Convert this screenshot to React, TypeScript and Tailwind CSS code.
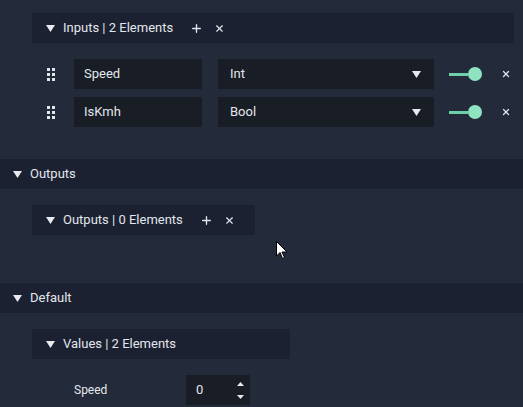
import { Plus, X } from 'lucide-react';

function Caret({ className = '' }: { className?: string }) {
    return (
        <svg width="9" height="7" viewBox="0 0 9 7" className={className}>
            <path d="M0 0 H9 L4.5 7 Z" fill="#e6e9ee" />
        </svg>
    );
}

function GroupHeader({ title, width, actions = true }: { title: string; width: string; actions?: boolean }) {
    return (
        <div className={`flex h-[30px] items-center bg-[#1b2130] pl-[14px] ${width}`}>
            <Caret />
            <span className="ml-[8px] text-[13px] text-[#e2e6ed]">{title}</span>
            {actions && (
                <>
                    <Plus className="ml-[17px] h-[13px] w-[13px] text-[#e2e6ed]" strokeWidth={2.5} />
                    <X className="ml-[11px] h-[11px] w-[11px] text-[#e2e6ed]" strokeWidth={2.5} />
                </>
            )}
        </div>
    );
}

function SectionHeader({ title }: { title: string }) {
    return (
        <div className="flex h-[30px] items-center bg-[#1b2130] pl-[13px]">
            <Caret />
            <span className="ml-[8px] text-[13px] text-[#e2e6ed]">{title}</span>
        </div>
    );
}

function DragHandle() {
    return (
        <div className="grid grid-cols-2 gap-x-[2px] gap-y-[2px]">
            {[0, 1, 2, 3, 4, 5].map((i) => (
                <span key={i} className="block h-[3px] w-[3px] bg-[#e2e6ed]" />
            ))}
        </div>
    );
}

function InputRow({ name, type }: { name: string; type: string }) {
    return (
        <div className="flex h-[30px] items-center pl-[47px]">
            <DragHandle />
            <div className="ml-[19px] flex h-[30px] w-[128px] items-center bg-[#181d26] pl-[10px] text-[13px] text-[#e2e6ed]">
                {name}
            </div>
            <div className="ml-[16px] flex h-[30px] w-[216px] items-center justify-between bg-[#181d26] pl-[12px] pr-[13px] text-[13px] text-[#e2e6ed]">
                <span>{type}</span>
                <Caret />
            </div>
            <div className="ml-[15px] flex items-center">
                <span className="block h-[3px] w-[19px] bg-[#6fcfa8]" />
                <span className="block h-[14px] w-[14px] rounded-full bg-[#8ee4c1]" />
            </div>
            <X className="ml-[19px] h-[10px] w-[10px] text-[#e2e6ed]" strokeWidth={3} />
        </div>
    );
}

export default function App() {
    return (
        <div
            className="relative h-[407px] w-[523px] overflow-hidden bg-[#232a3a]"
            style={{ fontFamily: 'Roboto, "Liberation Sans", sans-serif' }}
        >
            <div className="pl-[32px] pr-[9px] pt-[13px]">
                <GroupHeader title="Inputs | 2 Elements" width="w-full" />
            </div>
            <div className="mt-[16px] flex flex-col gap-[8px]">
                <InputRow name="Speed" type="Int" />
                <InputRow name="IsKmh" type="Bool" />
            </div>

            <div className="mt-[32px]">
                <SectionHeader title="Outputs" />
            </div>
            <div className="mt-[16px] pl-[32px]">
                <GroupHeader title="Outputs | 0 Elements" width="w-[223px]" />
            </div>

            <div className="mt-[48px]">
                <SectionHeader title="Default" />
            </div>
            <div className="mt-[16px] pl-[32px]">
                <GroupHeader title="Values | 2 Elements" width="w-[258px]" actions={false} />
            </div>
            <div className="mt-[16px] flex h-[30px] items-center pl-[74px]">
                <span className="w-[112px] text-[12px] text-[#e2e6ed]">Speed</span>
                <div className="flex h-[30px] w-[64px] items-center justify-between bg-[#181d26] pl-[10px] pr-[6px] text-[13px] text-[#e2e6ed]">
                    <span>0</span>
                    <div className="flex flex-col items-center gap-[9px]">
                        <svg width="7" height="4" viewBox="0 0 7 4">
                            <path d="M0 4 L3.5 0 L7 4 Z" fill="#e6e9ee" />
                        </svg>
                        <svg width="7" height="4" viewBox="0 0 7 4">
                            <path d="M0 0 H7 L3.5 4 Z" fill="#e6e9ee" />
                        </svg>
                    </div>
                </div>
            </div>

            {/* mouse pointer */}
            <svg className="absolute left-[276px] top-[241px]" width="12" height="19" viewBox="0 0 12 19">
                <path d="M0.5 0.5 V15 L4 11.5 L6.5 17.5 L8.5 16.5 L6 11 H11 Z" fill="#ffffff" stroke="#000000" strokeWidth="1" />
            </svg>
        </div>
    );
}
